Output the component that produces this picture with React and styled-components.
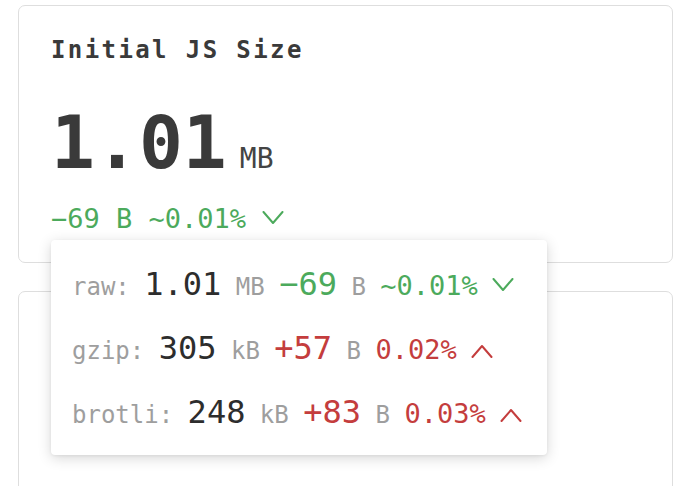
import React from "react";
import styled, { createGlobalStyle } from "styled-components";

const GlobalStyle = createGlobalStyle`
  body {
    margin: 0;
    background: #ffffff;
    font-family: "DejaVu Sans Mono", "Liberation Mono", monospace;
  }
`;

const Page = styled.div`
  padding: 5px 11px 0 18px;
  display: flex;
  flex-direction: column;
  gap: 28px;
  height: 486px;
  overflow: hidden;
  box-sizing: border-box;
`;

const Card = styled.div`
  flex-shrink: 0;
  border: 1px solid #dedede;
  border-radius: 7px;
  background: #fff;
  padding: 31px 32px 30px;
  height: ${(p) => (p.$tall ? "240px" : "auto")};
  box-sizing: border-box;
`;

const Title = styled.h2`
  margin: 0;
  font-size: 24px;
  line-height: 26px;
  font-weight: bold;
  letter-spacing: 2.4px;
  color: #3a3a3a;
`;

const SizeRow = styled.div`
  display: flex;
  align-items: baseline;
  gap: 13px;
  margin-top: 43px;
  line-height: 1;
`;

const BigValue = styled.span`
  font-size: 73px;
  font-weight: bold;
  color: #3a3a3a;
`;

const BigUnit = styled.span`
  font-size: 28px;
  color: #444;
`;

const DeltaLine = styled.div`
  position: relative;
  margin-top: 26px;
  font-size: 27px;
  line-height: 1;
  color: ${(p) => p.$color};
`;

const Popup = styled.div`
  position: absolute;
  top: calc(100% + 8px);
  left: 0;
  z-index: 10;
  width: 496px;
  box-sizing: border-box;
  padding: 15px 20px 8px 21px;
  background: #fff;
  border-radius: 4px;
  box-shadow: 0 3px 14px rgba(0, 0, 0, 0.16), 0 1px 3px rgba(0, 0, 0, 0.06);
`;

const Row = styled.div`
  font-size: 24px;
  line-height: 64px;
  white-space: nowrap;
  color: #9e9e9e;
`;

const Muted = styled.span`
  font-size: 24px;
  line-height: 1;
  color: #9e9e9e;
`;

const Value = styled.span`
  font-size: 32px;
  line-height: 1;
  color: ${(p) => p.$color || "#2d2d2d"};
`;

const Percent = styled.span`
  font-size: 27px;
  line-height: 1;
  color: ${(p) => p.$color};
`;

const Chevron = styled.svg`
  width: 22px;
  height: 14px;
  margin-bottom: ${(p) => (p.$up ? "1px" : "3px")};
  vertical-align: baseline;
`;

const GREEN = "#4caa5c";
const RED = "#c43d3d";

const Arrow = ({ up, color }) => (
  <Chevron $up={up} viewBox="0 0 22 14" fill="none">
    <path
      d={up ? "M1.5 13 L11 2 L20.5 13" : "M1.5 1 L11 12 L20.5 1"}
      stroke={color}
      strokeWidth="2"
      strokeLinecap="round"
      strokeLinejoin="round"
    />
  </Chevron>
);

const rows = [
  { label: "raw:", value: "1.01", unit: "MB", delta: "−69", pct: "~0.01%", up: false },
  { label: "gzip:", value: "305", unit: "kB", delta: "+57", pct: "0.02%", up: true },
  { label: "brotli:", value: "248", unit: "kB", delta: "+83", pct: "0.03%", up: true },
];

const App = () => {
  return (
    <>
      <GlobalStyle />
      <Page>
        <Card>
          <Title>Initial JS Size</Title>
          <SizeRow>
            <BigValue>1.01</BigValue>
            <BigUnit>MB</BigUnit>
          </SizeRow>
          <DeltaLine $color={GREEN}>
            −69 B ~0.01% <Arrow up={false} color={GREEN} />
            <Popup>
              {rows.map((r) => {
                const c = r.up ? RED : GREEN;
                return (
                  <Row key={r.label}>
                    <Muted>{r.label}</Muted> <Value>{r.value}</Value>{" "}
                    <Muted>{r.unit}</Muted> <Value $color={c}>{r.delta}</Value>{" "}
                    <Muted>B</Muted> <Percent $color={c}>{r.pct}</Percent>{" "}
                    <Arrow up={r.up} color={c} />
                  </Row>
                );
              })}
            </Popup>
          </DeltaLine>
        </Card>
        <Card $tall />
      </Page>
    </>
  );
};

export default App;
